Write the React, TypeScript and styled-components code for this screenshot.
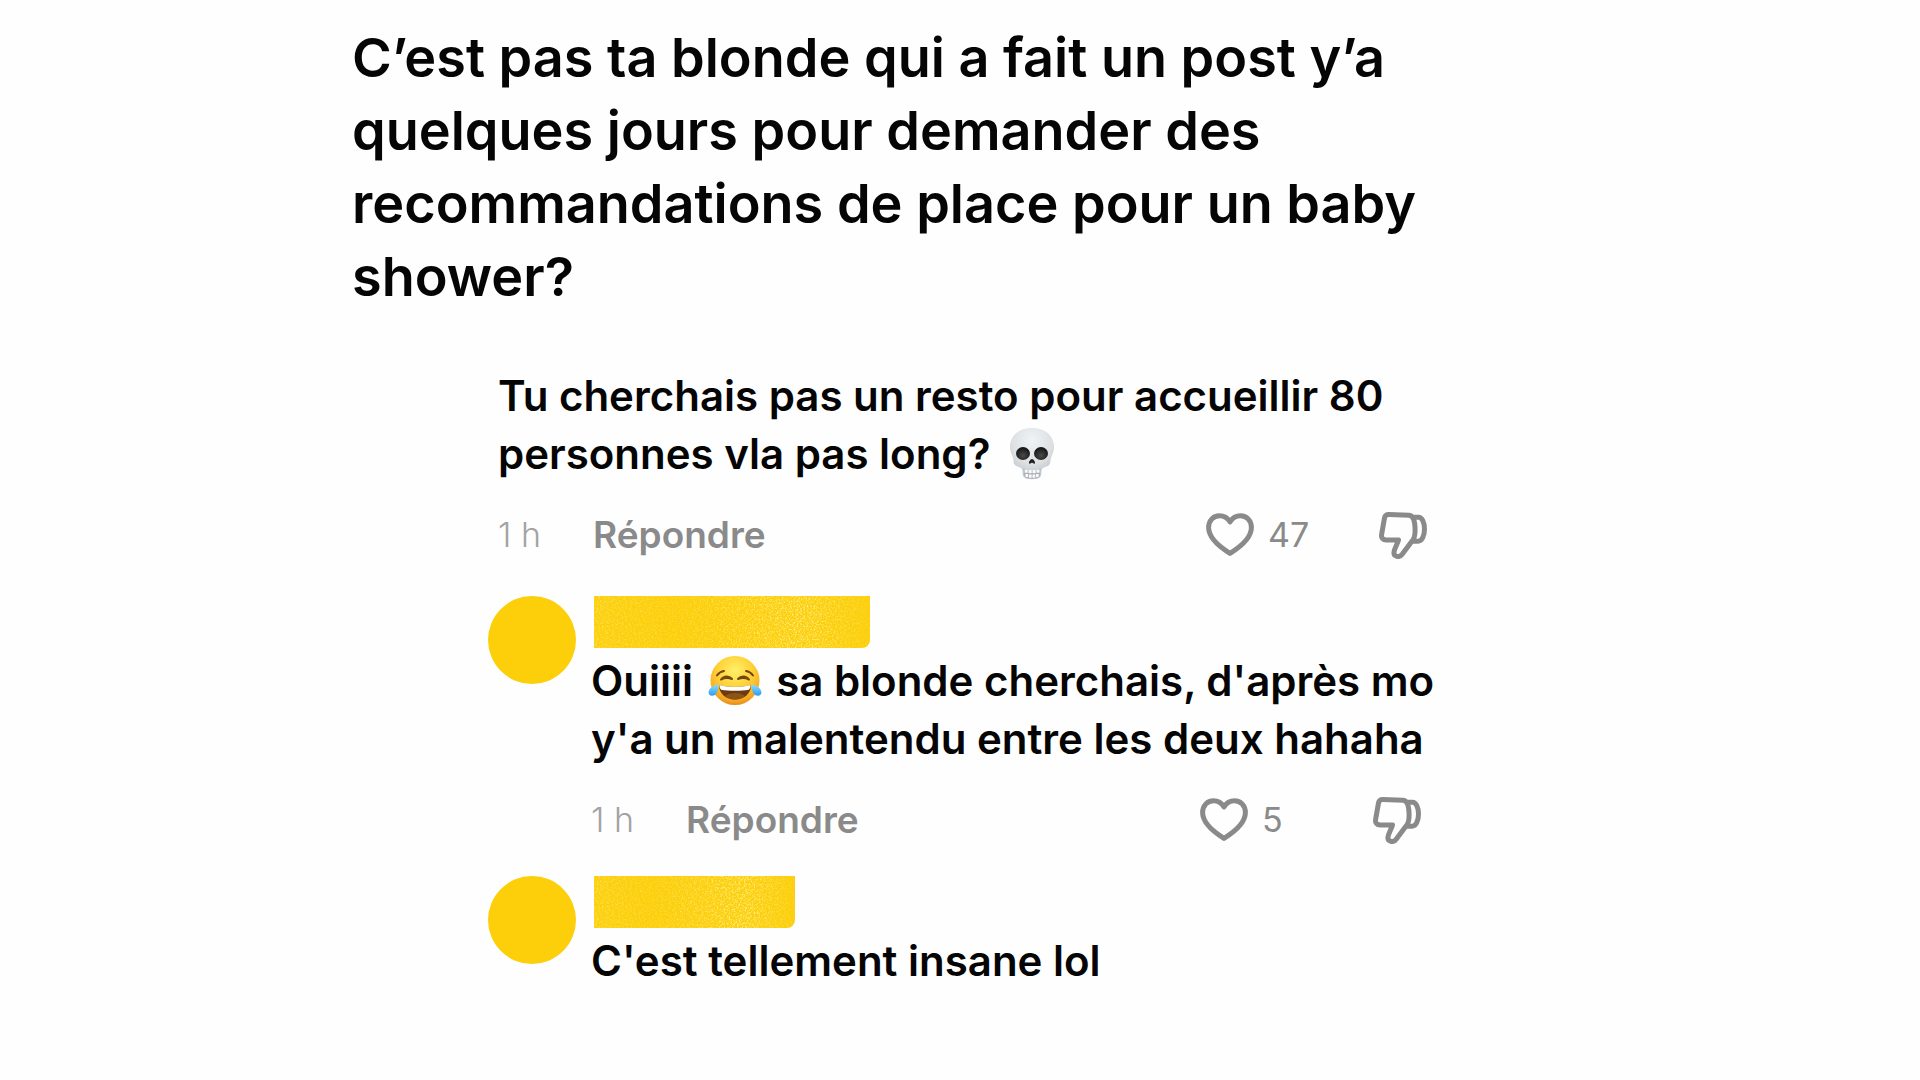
import React from 'react';
import styled, { createGlobalStyle } from 'styled-components';

const GlobalStyle = createGlobalStyle`
  *, *::before, *::after { box-sizing: border-box; }
  body {
    margin: 0;
    background: #fefefe;
    color: #050505;
    font-family: Inter, "Noto Sans", sans-serif;
    font-weight: 590;
  }
`;

const Page = styled.main`
  max-width: 1216px;
  margin: 0 auto;
  padding: 21px 0 48px;
`;

const Title = styled.h1`
  margin: 0;
  font-size: 54px;
  line-height: 73px;
  font-weight: 575;
`;

const Thread = styled.section`
  max-width: 1096px;
  margin-top: 54px;
  padding-left: 146px;
`;

const Message = styled.p`
  margin: 0;
  font-size: 42px;
  line-height: 58px;
`;

const Actions = styled.div<{ $inset: number }>`
  display: flex;
  align-items: flex-start;
  margin-top: 28px;
  padding-right: ${p => p.$inset}px;
`;

const Time = styled.time`
  flex: 0 0 95px;
  font-size: 34px;
  line-height: 48px;
  font-weight: 350;
  color: #a3a3a3;
`;

const PlainButton = styled.button`
  padding: 0;
  border: 0;
  background: none;
  color: #8a8a8a;
  font: inherit;
  cursor: pointer;
`;

const ReplyButton = styled(PlainButton)`
  margin-right: auto;
  font-size: 37px;
  line-height: 48px;
`;

const LikeButton = styled(PlainButton)`
  display: flex;
  align-items: flex-start;
  gap: 14px;
  min-width: 173px;
  font-size: 34px;
  line-height: 48px;
  font-weight: 400;
`;

const DislikeButton = styled(PlainButton)`
  display: flex;
`;

const Icon = styled.svg`
  display: block;
  flex: none;
  width: 48px;
  height: 48px;
  fill: none;
  stroke: #8a8a8a;
  stroke-width: 5;
  stroke-linejoin: round;
  stroke-linecap: round;
`;

const Emoji = styled.svg`
  width: 54px;
  height: 54px;
  margin: 0 4px;
  vertical-align: -12px;
`;

const Reply = styled.article`
  display: grid;
  grid-template-columns: 88px minmax(0, 1fr);
  column-gap: 15px;
  margin: 37px 0 0 -10px;

  & + & { margin-top: 32px; }
`;

const Avatar = styled.div`
  width: 88px;
  height: 88px;
  border-radius: 50%;
  background: #fccf0a;
`;

const ReplyBody = styled.div`
  min-width: 0;
`;

const NameBar = styled.div<{ $width: number }>`
  width: ${p => p.$width}px;
  max-width: 100%;
  height: 52px;
  margin: 0 0 4px 3px;
  border-radius: 0 0 8px 0;
  background: #fccf0a;
  overflow: hidden;
`;

const Grain = styled.svg`
  display: block;
  width: 100%;
  height: 100%;
`;

function Redacted({ width, id }: { width: number; id: string }) {
  return (
    <NameBar $width={width}>
      <Grain aria-hidden="true">
        <defs>
          <filter id={`${id}-noise`} x="0" y="0" width="100%" height="100%">
            <feTurbulence type="fractalNoise" baseFrequency="0.6" numOctaves="2" seed="4" />
            <feColorMatrix values="0 0 0 0 1  0 0 0 0 0.92  0 0 0 0 0.45  2.6 0 0 0 -1.1" />
          </filter>
          <linearGradient id={`${id}-fade`}>
            <stop offset="0" stopColor="#777" />
            <stop offset="0.3" stopColor="#444" />
            <stop offset="0.75" stopColor="#ddd" />
            <stop offset="1" stopColor="#333" />
          </linearGradient>
          <mask id={`${id}-mask`}>
            <rect width="100%" height="100%" fill={`url(#${id}-fade)`} />
          </mask>
        </defs>
        <g mask={`url(#${id}-mask)`}>
          <rect width="100%" height="100%" filter={`url(#${id}-noise)`} />
        </g>
      </Grain>
    </NameBar>
  );
}

function Skull() {
  return (
    <Emoji viewBox="0 0 54 54" role="img" aria-label="crâne">
      <defs>
        <radialGradient id="bone" cx="0.5" cy="0.25" r="0.75">
          <stop offset="0" stopColor="#f0f3f5" />
          <stop offset="0.6" stopColor="#dde1e4" />
          <stop offset="1" stopColor="#b9bec3" />
        </radialGradient>
        <radialGradient id="socket" cx="0.5" cy="0.65" r="0.6">
          <stop offset="0" stopColor="#4a4a4a" />
          <stop offset="1" stopColor="#151515" />
        </radialGradient>
      </defs>
      <path d="M27 1C13 1 5 9 5 20c0 5 2 8 3 11 1 3 0 5 2 7 2 2 6 2 7 4 1 2 0 6 2 8 2 3 14 3 16 0 2-2 1-6 2-8 1-2 5-2 7-4 2-2 1-4 2-7 1-3 3-6 3-11C49 9 41 1 27 1Z" fill="url(#bone)" />
      <ellipse cx="18" cy="26.500" rx="7" ry="6.500" fill="url(#socket)" />
      <ellipse cx="36" cy="26.500" rx="7" ry="6.500" fill="url(#socket)" />
      <path d="M27 32c-1.600 0-3.400 3-3 4.200.4 1 2 .2 3-.6 1 .8 2.600 1.600 3 .6.4-1.200-1.400-4.200-3-4.200Z" fill="#222" />
      <path d="M18.500 41.500c5 2 12 2 17 0l-1 8c-4 2-11 2-15 0Z" fill="#a9adb1" />
      <path d="M19.500 42.500h3.200v3.200h-3zM23.500 43h3.200v3.300h-3.200zM27.500 43h3.200v3.300h-3.200zM31.500 42.500h3.200l-.3 3.200h-2.900zM20.300 47h2.800v3h-2.500zM23.900 47.400h2.800v3.300h-2.800zM27.500 47.400h2.800v3.300h-2.800zM31.100 47h2.700l-.3 3h-2.400z" fill="#fafafa" />
    </Emoji>
  );
}

function TearsOfJoy() {
  return (
    <Emoji viewBox="0 0 54 54" role="img" aria-label="rire aux larmes">
      <defs>
        <radialGradient id="face" cx="0.5" cy="0.3" r="0.72">
          <stop offset="0" stopColor="#fff06a" />
          <stop offset="0.5" stopColor="#fed136" />
          <stop offset="0.85" stopColor="#f6a723" />
          <stop offset="1" stopColor="#e2861a" />
        </radialGradient>
        <linearGradient id="tear" x1="0" y1="0" x2="0" y2="1">
          <stop offset="0" stopColor="#8fdcfb" />
          <stop offset="1" stopColor="#2a9df0" />
        </linearGradient>
      </defs>
      <circle cx="27" cy="26.500" r="24.500" fill="url(#face)" />
      <path d="M11 31c8 2.500 24 2.500 32 0 0 8-6 14.500-16 14.500S11 39 11 31Z" fill="#6b3a10" />
      <path d="M11.500 31c8 2.500 23 2.500 31 0 .3 2-.5 3.600-1.600 4.800-8 1.400-19.800 1.400-27.800 0-1.100-1.200-1.900-2.800-1.600-4.800Z" fill="#fff" />
      <path d="M17 42c5-4 15-4 20 0-5 4.500-15 4.500-20 0Z" fill="#8d5417" />
      <g fill="none" stroke="#754512" strokeLinecap="round" strokeLinejoin="round">
        <path d="M13 25.500c3-4 8-4 11-.5-3-1-8-1-11 .5ZM41 25.500c-3-4-8-4-11-.5 3-1 8-1 11 .5Z" strokeWidth="2" />
        <path d="M9 21.500c2-3 4-4 7-4.500M45 21.500c-2-3-4-4-7-4.500" strokeWidth="2" />
      </g>
      <path d="M10.500 30.500C6 31 2 33.500.8 37c-.9 2.800.6 4.800 3.200 4.800 4.500 0 6.500-5.300 6.500-11.300ZM43.500 30.500C48 31 52 33.500 53.200 37c.9 2.800-.6 4.800-3.200 4.800-4.500 0-6.500-5.300-6.500-11.300Z" fill="url(#tear)" />
    </Emoji>
  );
}

function CommentActions({ likes, inset }: { likes: number; inset: number }) {
  return (
    <Actions $inset={inset}>
      <Time>1 h</Time>
      <ReplyButton type="button">Répondre</ReplyButton>
      <LikeButton type="button" aria-label={`J'aime, ${likes}`}>
        <Icon viewBox="0 0 48 48" aria-hidden="true">
          <path d="M24 10.800C21.500 6.800 17.600 4.800 13.500 4.800 7.200 4.800 2.600 9.800 2.600 16.600c0 10.400 9.400 18.400 21.400 25.800 12-7.400 21.400-15.400 21.400-25.800 0-6.800-4.600-11.800-10.900-11.800-4.100 0-8 2-10.500 6Z" />
        </Icon>
        {likes}
      </LikeButton>
      <DislikeButton type="button" aria-label="Je n'aime pas">
        <Icon viewBox="0 0 48 48" aria-hidden="true">
          <path d="M10 3.500 30 4.200c3.500.2 5.600 5 6 11.800.3 5.500.2 9.500-1.800 12.500L23 43.500c-2.500 3.400-8.700 2.300-8-2.500.5-3.500 3.500-8.500 4.500-12H7.300C3.800 29 2 26.500 2.600 23.500L5.500 7C6 4.500 7.500 3.400 10 3.500Z" />
          <path d="M34.800 6.200h4.700c3.500 0 6 5 6 11.800s-2.500 12.200-6.500 12.200h-4.500" />
        </Icon>
      </DislikeButton>
    </Actions>
  );
}

export default function App() {
  return (
    <>
      <GlobalStyle />
      <Page>
        <Title>
          C’est pas ta blonde qui a fait un post y’a quelques jours pour demander des
          recommandations de place pour un baby shower?
        </Title>
        <Thread>
          <Message>
            Tu cherchais pas un resto pour accueillir 80 personnes vla pas long? <Skull />
          </Message>
          <CommentActions likes={47} inset={21} />
          <Reply>
            <Avatar />
            <ReplyBody>
              <Redacted width={276} id="first" />
              <Message>
                Ouiiii <TearsOfJoy /> sa blonde cherchais, d'après mo y'a un malentendu entre les
                deux hahaha
              </Message>
              <CommentActions likes={5} inset={27} />
            </ReplyBody>
          </Reply>
          <Reply>
            <Avatar />
            <ReplyBody>
              <Redacted width={201} id="second" />
              <Message>C'est tellement insane lol</Message>
            </ReplyBody>
          </Reply>
        </Thread>
      </Page>
    </>
  );
}
